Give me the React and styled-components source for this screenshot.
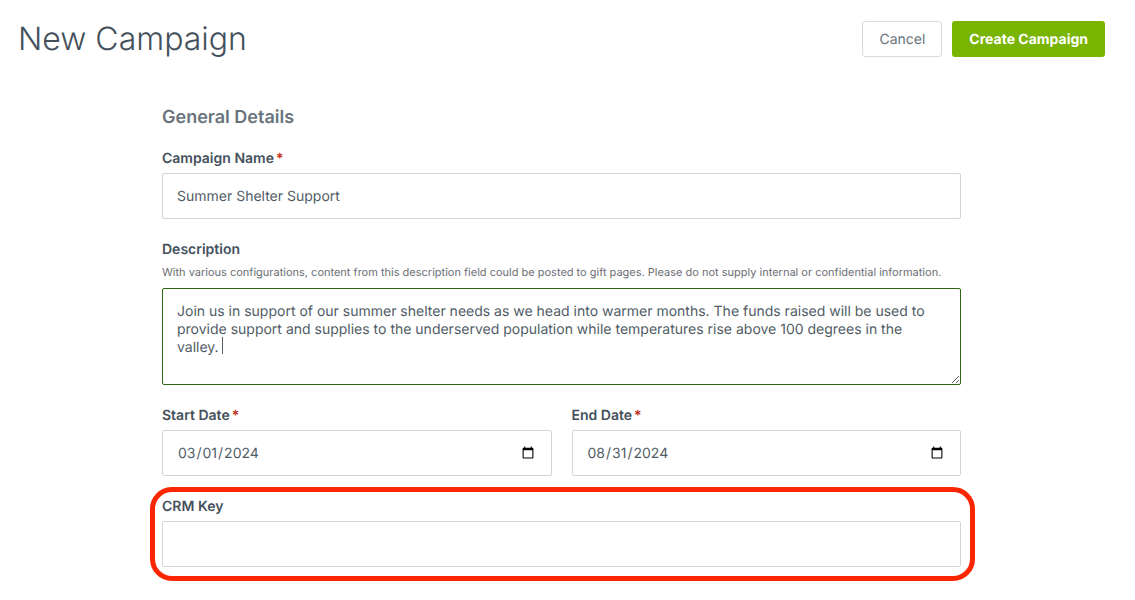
import React, { useEffect, useRef, useState } from "react";
import styled, { createGlobalStyle } from "styled-components";

const DESCRIPTION =
  "Join us in support of our summer shelter needs as we head into warmer months. The funds raised will be used to provide support and supplies to the underserved population while temperatures rise above 100 degrees in the valley. ";

export default function App() {
  const [campaign, setCampaign] = useState({
    name: "Summer Shelter Support",
    description: DESCRIPTION,
    startDate: "2024-03-01",
    endDate: "2024-08-31",
    crmKey: "",
  });
  const descriptionRef = useRef(null);

  useEffect(() => {
    const el = descriptionRef.current;
    el.focus();
    el.setSelectionRange(el.value.length, el.value.length);
  }, []);

  const handleChange = (e) =>
    setCampaign({ ...campaign, [e.target.name]: e.target.value });

  return (
    <Page>
      <GlobalStyle />
      <Header>
        <Title>New Campaign</Title>
        <Actions>
          <CancelButton type="button">Cancel</CancelButton>
          <CreateButton type="submit" form="campaign-form">
            Create Campaign
          </CreateButton>
        </Actions>
      </Header>

      <Form id="campaign-form" onSubmit={(e) => e.preventDefault()}>
        <SectionTitle>General Details</SectionTitle>

        <Field>
          <Label htmlFor="name">
            Campaign Name<Required>*</Required>
          </Label>
          <Input
            id="name"
            name="name"
            type="text"
            value={campaign.name}
            onChange={handleChange}
          />
        </Field>

        <Field>
          <Label htmlFor="description">Description</Label>
          <Hint id="description-hint">
            With various configurations, content from this description field
            could be posted to gift pages. Please do not supply internal or
            confidential information.
          </Hint>
          <TextAreaWrapper>
            <TextArea
              id="description"
              name="description"
              aria-describedby="description-hint"
              spellCheck={false}
              ref={descriptionRef}
              value={campaign.description}
              onChange={handleChange}
            />
            {campaign.description === DESCRIPTION && <Caret />}
          </TextAreaWrapper>
        </Field>

        <DateRow>
          <Field>
            <Label htmlFor="startDate">
              Start Date<Required>*</Required>
            </Label>
            <Input
              id="startDate"
              name="startDate"
              type="date"
              value={campaign.startDate}
              onChange={handleChange}
            />
          </Field>
          <Field>
            <Label htmlFor="endDate">
              End Date<Required>*</Required>
            </Label>
            <Input
              id="endDate"
              name="endDate"
              type="date"
              value={campaign.endDate}
              onChange={handleChange}
            />
          </Field>
        </DateRow>

        <HighlightedField>
          <Label htmlFor="crmKey">CRM Key</Label>
          <Input
            id="crmKey"
            name="crmKey"
            type="text"
            value={campaign.crmKey}
            onChange={handleChange}
          />
        </HighlightedField>
      </Form>
    </Page>
  );
}

const GlobalStyle = createGlobalStyle`
  * {
    box-sizing: border-box;
  }

  body {
    margin: 0;
    background-color: #fff;
    color: #44515c;
    font-family: Inter, "Liberation Sans", sans-serif;
    font-size: 14px;
    text-rendering: geometricPrecision;
  }
`;

const Page = styled.main`
  padding: 18px 30px 30px 18px;
`;

const Header = styled.header`
  display: flex;
  align-items: center;
  justify-content: space-between;
`;

const Title = styled.h1`
  margin: 0;
  font-size: 32px;
  font-weight: 350;
  line-height: 42px;
`;

const Actions = styled.div`
  display: flex;
  gap: 10px;
`;

const Button = styled.button`
  height: 36px;
  padding: 0 16px;
  border: 1px solid transparent;
  border-radius: 3px;
  font-family: inherit;
  font-size: 14px;
  text-rendering: inherit;
  cursor: pointer;
`;

const CancelButton = styled(Button)`
  border-color: #d9dadc;
  background-color: #fff;
  color: #66727b;
`;

const CreateButton = styled(Button)`
  background-color: #78b400;
  color: #fff;
  font-weight: 700;
`;

const Form = styled.form`
  display: flex;
  flex-direction: column;
  gap: 21px;
  max-width: 799px;
  margin: 48px auto 0;
`;

const SectionTitle = styled.h2`
  margin: 0;
  color: #68747c;
  font-size: 18px;
  font-weight: 600;
  line-height: 20px;
`;

const Field = styled.div`
  display: flex;
  flex-direction: column;
  gap: 4px;
  min-width: 0;
`;

const HighlightedField = styled(Field)`
  position: relative;

  &::after {
    content: "";
    position: absolute;
    inset: -10px -14px -14px -12px;
    border: 5px solid #fb2500;
    border-radius: 22px;
    pointer-events: none;
  }
`;

const DateRow = styled.div`
  display: grid;
  grid-template-columns: 1fr 1fr;
  gap: 20px;
`;

const Label = styled.label`
  font-weight: 600;
  line-height: 20px;
`;

const Required = styled.span`
  margin-left: 2px;
  color: #c0321a;
`;

const Hint = styled.p`
  margin: 0 0 4px;
  color: #6b6e75;
  font-size: 11px;
  line-height: 16px;
`;

const Input = styled.input`
  width: 100%;
  height: 46px;
  padding: 0 14px;
  border: 1px solid #d3d4d6;
  border-radius: 2px;
  background-color: #fff;
  color: #505c66;
  font-family: inherit;
  font-size: 14px;
  text-rendering: inherit;
  outline: none;
`;

const TextAreaWrapper = styled.div`
  position: relative;
`;

const TextArea = styled.textarea`
  display: block;
  width: 100%;
  height: 97px;
  padding: 14px;
  border: 1px solid #2f6410;
  border-radius: 2px;
  color: #505c66;
  caret-color: transparent;
  font-family: inherit;
  font-size: 14px;
  line-height: 18px;
  text-rendering: inherit;
  outline: none;
  resize: vertical;
`;

const Caret = styled.span`
  position: absolute;
  top: 49px;
  left: 60px;
  width: 1px;
  height: 17px;
  background-color: #505c66;
  pointer-events: none;
`;
